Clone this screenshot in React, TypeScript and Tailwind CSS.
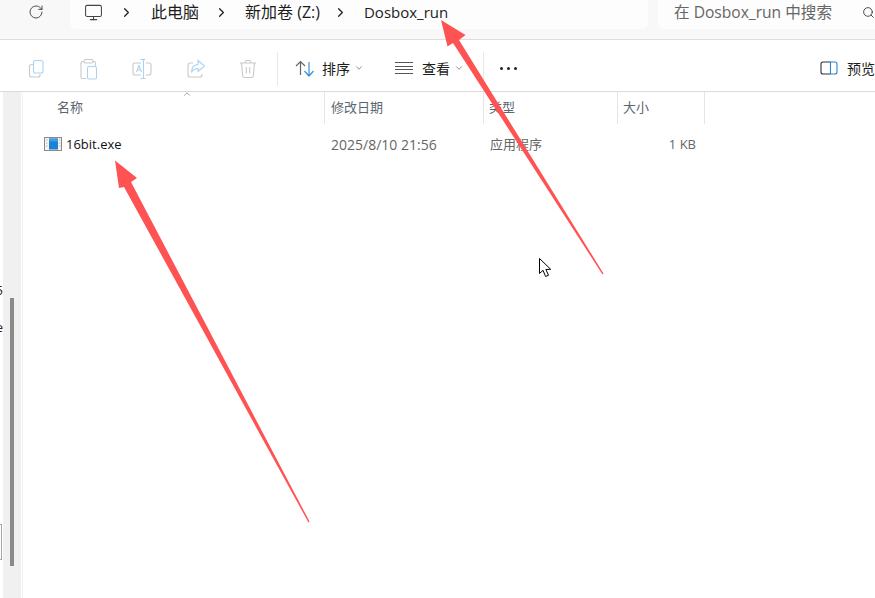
import { ChevronDown, ChevronRight, ChevronUp, Monitor, RotateCw, Search } from "lucide-react";

const FONT = "font-['Open_Sans','Noto_Sans_CJK_SC',sans-serif]";

function Crumb({ label, latin }: { label: string; latin?: boolean }) {
  return <span className={`${latin ? "text-[15px]" : "text-[16px]"} leading-none text-[#1c1c1c]`}>{label}</span>;
}

function Sep() {
  return <ChevronRight size={15} strokeWidth={2} className="text-[#222]" />;
}

function AddressBar() {
  return (
    <div className="flex h-[40px] shrink-0 border-b border-[#dcdcdc] bg-[#f8f8f8]">
      <div className="flex w-[70px] shrink-0 items-center pb-[15px] pl-[28px]">
        <RotateCw size={16} strokeWidth={1.4} className="text-[#444]" />
      </div>
      <div className="flex h-[29px] w-[578px] shrink-0 items-center rounded-b-md bg-[#fdfdfd] pb-[5px] pl-[14px]">
        <Monitor size={19} strokeWidth={1.3} className="text-[#444]" />
        <div className="ml-[16px]"><Sep /></div>
        <div className="ml-[17px]"><Crumb label="此电脑" /></div>
        <div className="ml-[15px]"><Sep /></div>
        <div className="ml-[16px]"><Crumb label="新加卷 (Z:)" /></div>
        <div className="ml-[13px]"><Sep /></div>
        <div className="ml-[16px]"><Crumb label="Dosbox_run" latin /></div>
      </div>
      <div className="ml-[10px] flex h-[29px] flex-1 items-center rounded-bl-md bg-[#fdfdfd] pb-[4px] pl-[16px]">
        <span className="shrink-0 whitespace-nowrap text-[15.6px] leading-none text-[#666]">在 Dosbox_run 中搜索</span>
        <Search size={13} strokeWidth={1.6} className="ml-[30px] shrink-0 text-[#333]" />
      </div>
    </div>
  );
}

function CopyIcon() {
  return (
    <svg width="20" height="20" viewBox="0 0 20 20" fill="none" strokeWidth="1.1">
      <path d="M6 5.5H4.5A2 2 0 0 0 2.5 7.5V16a2 2 0 0 0 2 2H11a2 2 0 0 0 2-2v-1" stroke="#c9c9c9" />
      <rect x="6.5" y="1.5" width="9.5" height="12.5" rx="2" stroke="#a9d3f5" fill="#fff" />
    </svg>
  );
}

function PasteIcon() {
  return (
    <svg width="20" height="22" viewBox="0 0 20 22" fill="none" strokeWidth="1.1">
      <path d="M5 3.5H3.5A1.5 1.5 0 0 0 2 5v14a1.5 1.5 0 0 0 1.500 1.500H7M14 3.500h1A1.500 1.500 0 0 1 16.500 5v3" stroke="#c9c9c9" />
      <rect x="5" y="1.500" width="9" height="3.500" rx="1.500" stroke="#c9c9c9" />
      <rect x="8.500" y="8.500" width="9" height="12.500" rx="1.500" stroke="#a9d3f5" fill="#fff" />
    </svg>
  );
}

function RenameIcon() {
  return (
    <svg width="20" height="22" viewBox="0 0 20 22" fill="none" strokeWidth="1.1">
      <path d="M9 5H3a2 2 0 0 0-2 2v8a2 2 0 0 0 2 2h6M14 5h3a2 2 0 0 1 2 2v8a2 2 0 0 1-2 2h-3" stroke="#c9c9c9" />
      <path d="M8.500 1.500h5M11.500 1.500v19M8.500 20.500h5" stroke="#a9d3f5" />
      <path d="M4.500 14l2.500-6.500L9.500 14M5.400 12h3.300" stroke="#a9d3f5" />
    </svg>
  );
}

function ShareIcon() {
  return (
    <svg width="20" height="20" viewBox="0 0 20 20" fill="none" strokeWidth="1.1">
      <path d="M7 4H4a2 2 0 0 0-2 2v10a2 2 0 0 0 2 2h10a2 2 0 0 0 2-2v-1" stroke="#c9c9c9" />
      <path d="M12 1.500l6.500 5.500-6.500 5.500V9.500c-3 0-5 1-6.500 4 0-5 2.500-7.500 6.500-8z" stroke="#a9d3f5" fill="#fff" />
    </svg>
  );
}

function TrashIcon() {
  return (
    <svg width="18" height="20" viewBox="0 0 18 20" fill="none" stroke="#c9c9c9" strokeWidth="1.1">
      <path d="M1 4h16M6.500 4V2.500a1 1 0 0 1 1-1h3a1 1 0 0 1 1 1V4M2.500 4l1.200 13a1.500 1.500 0 0 0 1.500 1.500h7.600a1.500 1.500 0 0 0 1.500-1.500L15.500 4M7.300 8v6.500M10.700 8v6.500" />
    </svg>
  );
}

function SortIcon() {
  return (
    <svg width="20" height="18" viewBox="0 0 20 18" fill="none" strokeWidth="1.200">
      <path d="M1 6l4.500-4.500L10 6M5.500 1.500V15" stroke="#666" />
      <path d="M9.500 11l4.500 5 4.500-5M14 16V2" stroke="#3b8fd9" />
    </svg>
  );
}

function ViewIcon() {
  return (
    <svg width="18" height="12" viewBox="0 0 18 12" fill="none" stroke="#555">
      <path d="M0 .5h18M0 4.500h18M0 7.500h18M0 11.500h18" />
    </svg>
  );
}

function PreviewIcon() {
  return (
    <svg width="18" height="14" viewBox="0 0 18 14" fill="none" strokeWidth="1.100">
      <path d="M10.500 1H3a2 2 0 0 0-2 2v8a2 2 0 0 0 2 2h7.500" stroke="#333" />
      <path d="M10.500 1H15a2 2 0 0 1 2 2v8a2 2 0 0 1-2 2h-4.500z" stroke="#2a84d2" />
    </svg>
  );
}

function Toolbar() {
  return (
    <div className="flex h-[52px] shrink-0 items-center border-b border-[#dcdcdc] bg-white pt-[6px]">
      <div className="flex w-[277px] shrink-0 items-center pl-[27px]">
        <div className="w-[52px]"><CopyIcon /></div>
        <div className="w-[53px]"><PasteIcon /></div>
        <div className="w-[54px]"><RenameIcon /></div>
        <div className="w-[53px]"><ShareIcon /></div>
        <TrashIcon />
      </div>
      <div className="h-[34px] w-px bg-[#e8e8e8]" />
      <div className="ml-[17px]"><SortIcon /></div>
      <span className="ml-[7px] text-[14px] leading-none text-[#1c1c1c]">排序</span>
      <ChevronDown size={10} className="ml-[4px] mb-[2px] text-[#777]" />
      <div className="ml-[31px] mb-[2px]"><ViewIcon /></div>
      <span className="ml-[9px] text-[14px] leading-none text-[#1c1c1c]">查看</span>
      <ChevronDown size={10} className="ml-[4px] mb-[2px] text-[#777]" />
      <div className="ml-[19px] h-[34px] w-px bg-[#e8e8e8]" />
      <span className="ml-[16px] flex gap-[4px]">
        <i className="h-[3px] w-[3px] rounded-full bg-[#222]" />
        <i className="h-[3px] w-[3px] rounded-full bg-[#222]" />
        <i className="h-[3px] w-[3px] rounded-full bg-[#222]" />
      </span>
      <div className="ml-[303px] mb-[2px]"><PreviewIcon /></div>
      <span className="ml-[9px] whitespace-nowrap text-[14px] leading-none text-[#1c1c1c]">预览</span>
    </div>
  );
}

function ExeIcon() {
  return (
    <svg className="-mt-[2px]" width="18" height="14" viewBox="0 0 18 14">
      <rect x=".5" y=".5" width="17" height="13" fill="#f4f4f4" stroke="#8a8a8a" />
      <rect x="5" y="1.500" width="9" height="11" fill="#1f7fd0" />
      <path d="M5 1.500h9v3H5z" fill="#3f9be4" />
      <path d="M2 3h1.500M2 6h1.500M2 9h1.500M15 3h1.500M15 6h1.500M15 9h1.500" stroke="#b5b5b5" />
    </svg>
  );
}

function LeftEdge() {
  return (
    <div className="flex w-[23px] shrink-0 bg-white">
      <div className="relative w-[3px] shrink-0 overflow-hidden text-[13px] leading-none text-[#222]">
        <span className="absolute right-0 top-[192px]">5</span>
        <span className="absolute right-0 top-[229px]">e</span>
        <span className="absolute left-0 top-[432px] h-[36px] w-[2px] border-y border-r border-[#a5a5a5]" />
      </div>
      <div className="w-[18px] bg-[#f0f0f0] pl-[7px] pt-[206px]">
        <div className="h-[268px] w-[4px] bg-[#8a8a8a]" />
      </div>
      <div className="w-[2px] border-r border-[#f3f3f3]" />
    </div>
  );
}

function Headers() {
  return (
    <div className="relative flex h-[32px] text-[13px] text-[#5c6670]">
      <ChevronUp size={10} className="absolute left-[159px] -top-[3px] text-[#666]" strokeWidth={1.500} />
      <div className="w-[301px] pl-[34px] pt-[6px] leading-[18px]">名称</div>
      <div className="w-[159px] border-l border-[#e5e5e5] pl-[6px] pt-[6px] leading-[18px]">修改日期</div>
      <div className="w-[134px] border-l border-[#e5e5e5] pl-[5px] pt-[6px] leading-[18px]">类型</div>
      <div className="w-[87px] border-l border-[#e5e5e5] pl-[5px] pt-[6px] leading-[18px]">大小</div>
      <div className="border-l border-[#e5e5e5]" />
    </div>
  );
}

function FileRow() {
  return (
    <div className="mt-[11px] flex h-[20px] items-center text-[13px]">
      <div className="flex w-[301px] items-center pl-[21px]">
        <ExeIcon />
        <span className="ml-[4px] text-[#111]">16bit.exe</span>
      </div>
      <div className="-mt-[2px] w-[159px] pl-[7px] text-[14px] text-[#666]">2025/8/10 21:56</div>
      <div className="w-[134px] pl-[7px] text-[#666]">应用程序</div>
      <div className="w-[79px] text-right text-[#666]">1 KB</div>
    </div>
  );
}

function Cursor() {
  return (
    <svg className="absolute left-[539px] top-[258px]" width="13" height="20" viewBox="0 0 13 20">
      <path d="M.5.500v15l3.500-3.200 2.600 6.200 2.900-1.200-2.600-5.800 4.800-.2z" fill="#fff" stroke="#000" />
    </svg>
  );
}

function Arrows() {
  return (
    <svg className="absolute inset-0" width="875" height="598" viewBox="0 0 875 598">
      <path d="M115 160.500 137 178 131 182 309.500 521.500 308.500 522.500 124 187 119 188z" fill="#ff5353" />
      <path d="M441 20 465.500 35 459 40 603.500 273.500 602.500 274.500 453 43 447.500 46.500z" fill="#ff5353" />
    </svg>
  );
}

export default function App() {
  return (
    <div className={`relative flex h-[598px] w-[875px] flex-col overflow-hidden bg-white ${FONT}`}>
      <AddressBar />
      <Toolbar />
      <div className="flex min-h-0 flex-1">
        <LeftEdge />
        <div className="min-w-0 flex-1">
          <Headers />
          <FileRow />
        </div>
      </div>
      <Cursor />
      <Arrows />
    </div>
  );
}
